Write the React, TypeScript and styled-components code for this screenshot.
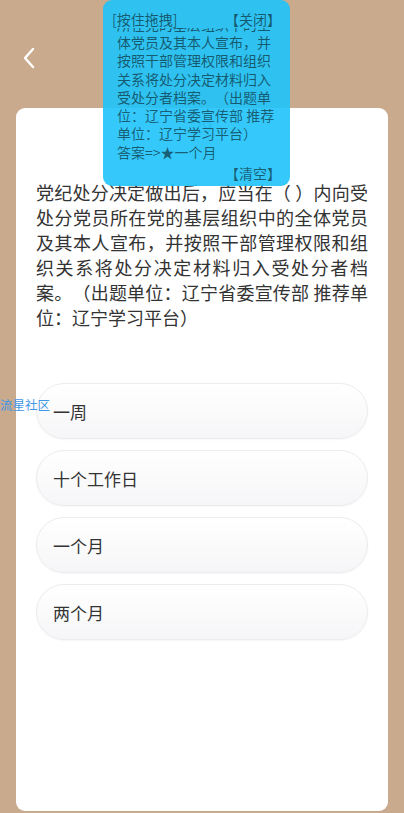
import React from "react";
import styled, { createGlobalStyle } from "styled-components";

const Global = createGlobalStyle`
  html, body { margin: 0; padding: 0; }
  body {
    font-family: "Noto Sans CJK SC", "Noto Sans", sans-serif;
    background: #c9aa8d;
    text-spacing-trim: space-all;
  }
`;

const Page = styled.div`
  position: relative;
  width: 404px;
  height: 813px;
  overflow: hidden;
  background: #c9aa8d;
  display: flex;
  flex-direction: column;
`;

const Header = styled.div`
  height: 108px;
  box-sizing: border-box;
  padding: 47px 0 0 22px;
  display: flex;
  align-items: flex-start;
`;

const BackButton = styled.button`
  width: 14px;
  height: 22px;
  padding: 0;
  border: 0;
  background: none;
  display: flex;
`;

const Card = styled.div`
  margin: 0 16px;
  height: 703px;
  background: #fff;
  border-radius: 9px;
  box-sizing: border-box;
  padding: 8px 20px 0;
  display: flex;
  flex-direction: column;
`;

const Timer = styled.div`
  height: 22px;
  line-height: 22px;
  text-align: center;
  font-family: Roboto, "Noto Sans", sans-serif;
  font-size: 18px;
  color: #9a9a9a;
`;

const Question = styled.div`
  margin-top: 42px;
  font-size: 18px;
  line-height: 25px;
  color: #333;
  text-align: justify;
  text-spacing-trim: space-all;
`;

const Options = styled.div`
  margin-top: 53px;
  display: flex;
  flex-direction: column;
  gap: 11px;
`;

const Option = styled.div`
  height: 56px;
  box-sizing: border-box;
  border: 1px solid #ececee;
  border-radius: 28px;
  background: linear-gradient(#ffffff, #f6f6f8);
  box-shadow: 0 1px 2px rgba(0, 0, 0, 0.04);
  padding-left: 16px;
  display: flex;
  align-items: center;
  font-size: 17px;
  color: #333;
`;

const Floating = styled.div`
  position: absolute;
  left: 103px;
  top: 0;
  width: 187px;
  height: 186px;
  box-sizing: border-box;
  padding: 10px 9px 0;
  border-radius: 9px;
  background: rgba(30, 195, 250, 0.9);
  color: rgba(0, 0, 0, 0.55);
  font-size: 14px;
  line-height: 18.3px;
  display: flex;
  flex-direction: column;
  text-spacing-trim: space-all;
`;

const FloatBar = styled.div`
  height: 18px;
  display: flex;
  justify-content: space-between;
`;

const FloatBody = styled.div`
  height: 133px;
  overflow: hidden;
  display: flex;
  flex-direction: column;
  justify-content: flex-end;
  padding-left: 5px;
`;

const FloatText = styled.div`
  width: 160px;
`;

const FloatFooter = styled.div`
  margin-top: 3px;
  height: 18px;
  display: flex;
  justify-content: flex-end;
`;

const Watermark = styled.div`
  position: absolute;
  left: 0;
  top: 397px;
  font-size: 12.5px;
  line-height: 16px;
  color: #4096e6;
`;

const question =
  "党纪处分决定做出后，应当在（ ）内向受处分党员所在党的基层组织中的全体党员及其本人宣布，并按照干部管理权限和组织关系将处分决定材料归入受处分者档案。（出题单位：辽宁省委宣传部 推荐单位：辽宁学习平台）";

const options = ["一周", "十个工作日", "一个月", "两个月"];

export default function App() {
  return (
    <Page>
      <Global />
      <Header>
        <BackButton aria-label="返回">
          <svg width="14" height="22" viewBox="0 0 14 22">
            <polyline
              points="11,2 3,11 11,20"
              fill="none"
              stroke="#fff"
              strokeWidth="2.4"
              strokeLinecap="round"
              strokeLinejoin="round"
            />
          </svg>
        </BackButton>
      </Header>
      <Card>
        <Timer>29</Timer>
        <Question>{question}</Question>
        <Options>
          {options.map((o) => (
            <Option key={o}>{o}</Option>
          ))}
        </Options>
      </Card>
      <Watermark>流星社区</Watermark>
      <Floating>
        <FloatBar>
          <span>[按住拖拽]</span>
          <span>【关闭】</span>
        </FloatBar>
        <FloatBody>
          <FloatText>{question}</FloatText>
          <FloatText>答案=&gt;★一个月</FloatText>
        </FloatBody>
        <FloatFooter>
          <span>【清空】</span>
        </FloatFooter>
      </Floating>
    </Page>
  );
}
